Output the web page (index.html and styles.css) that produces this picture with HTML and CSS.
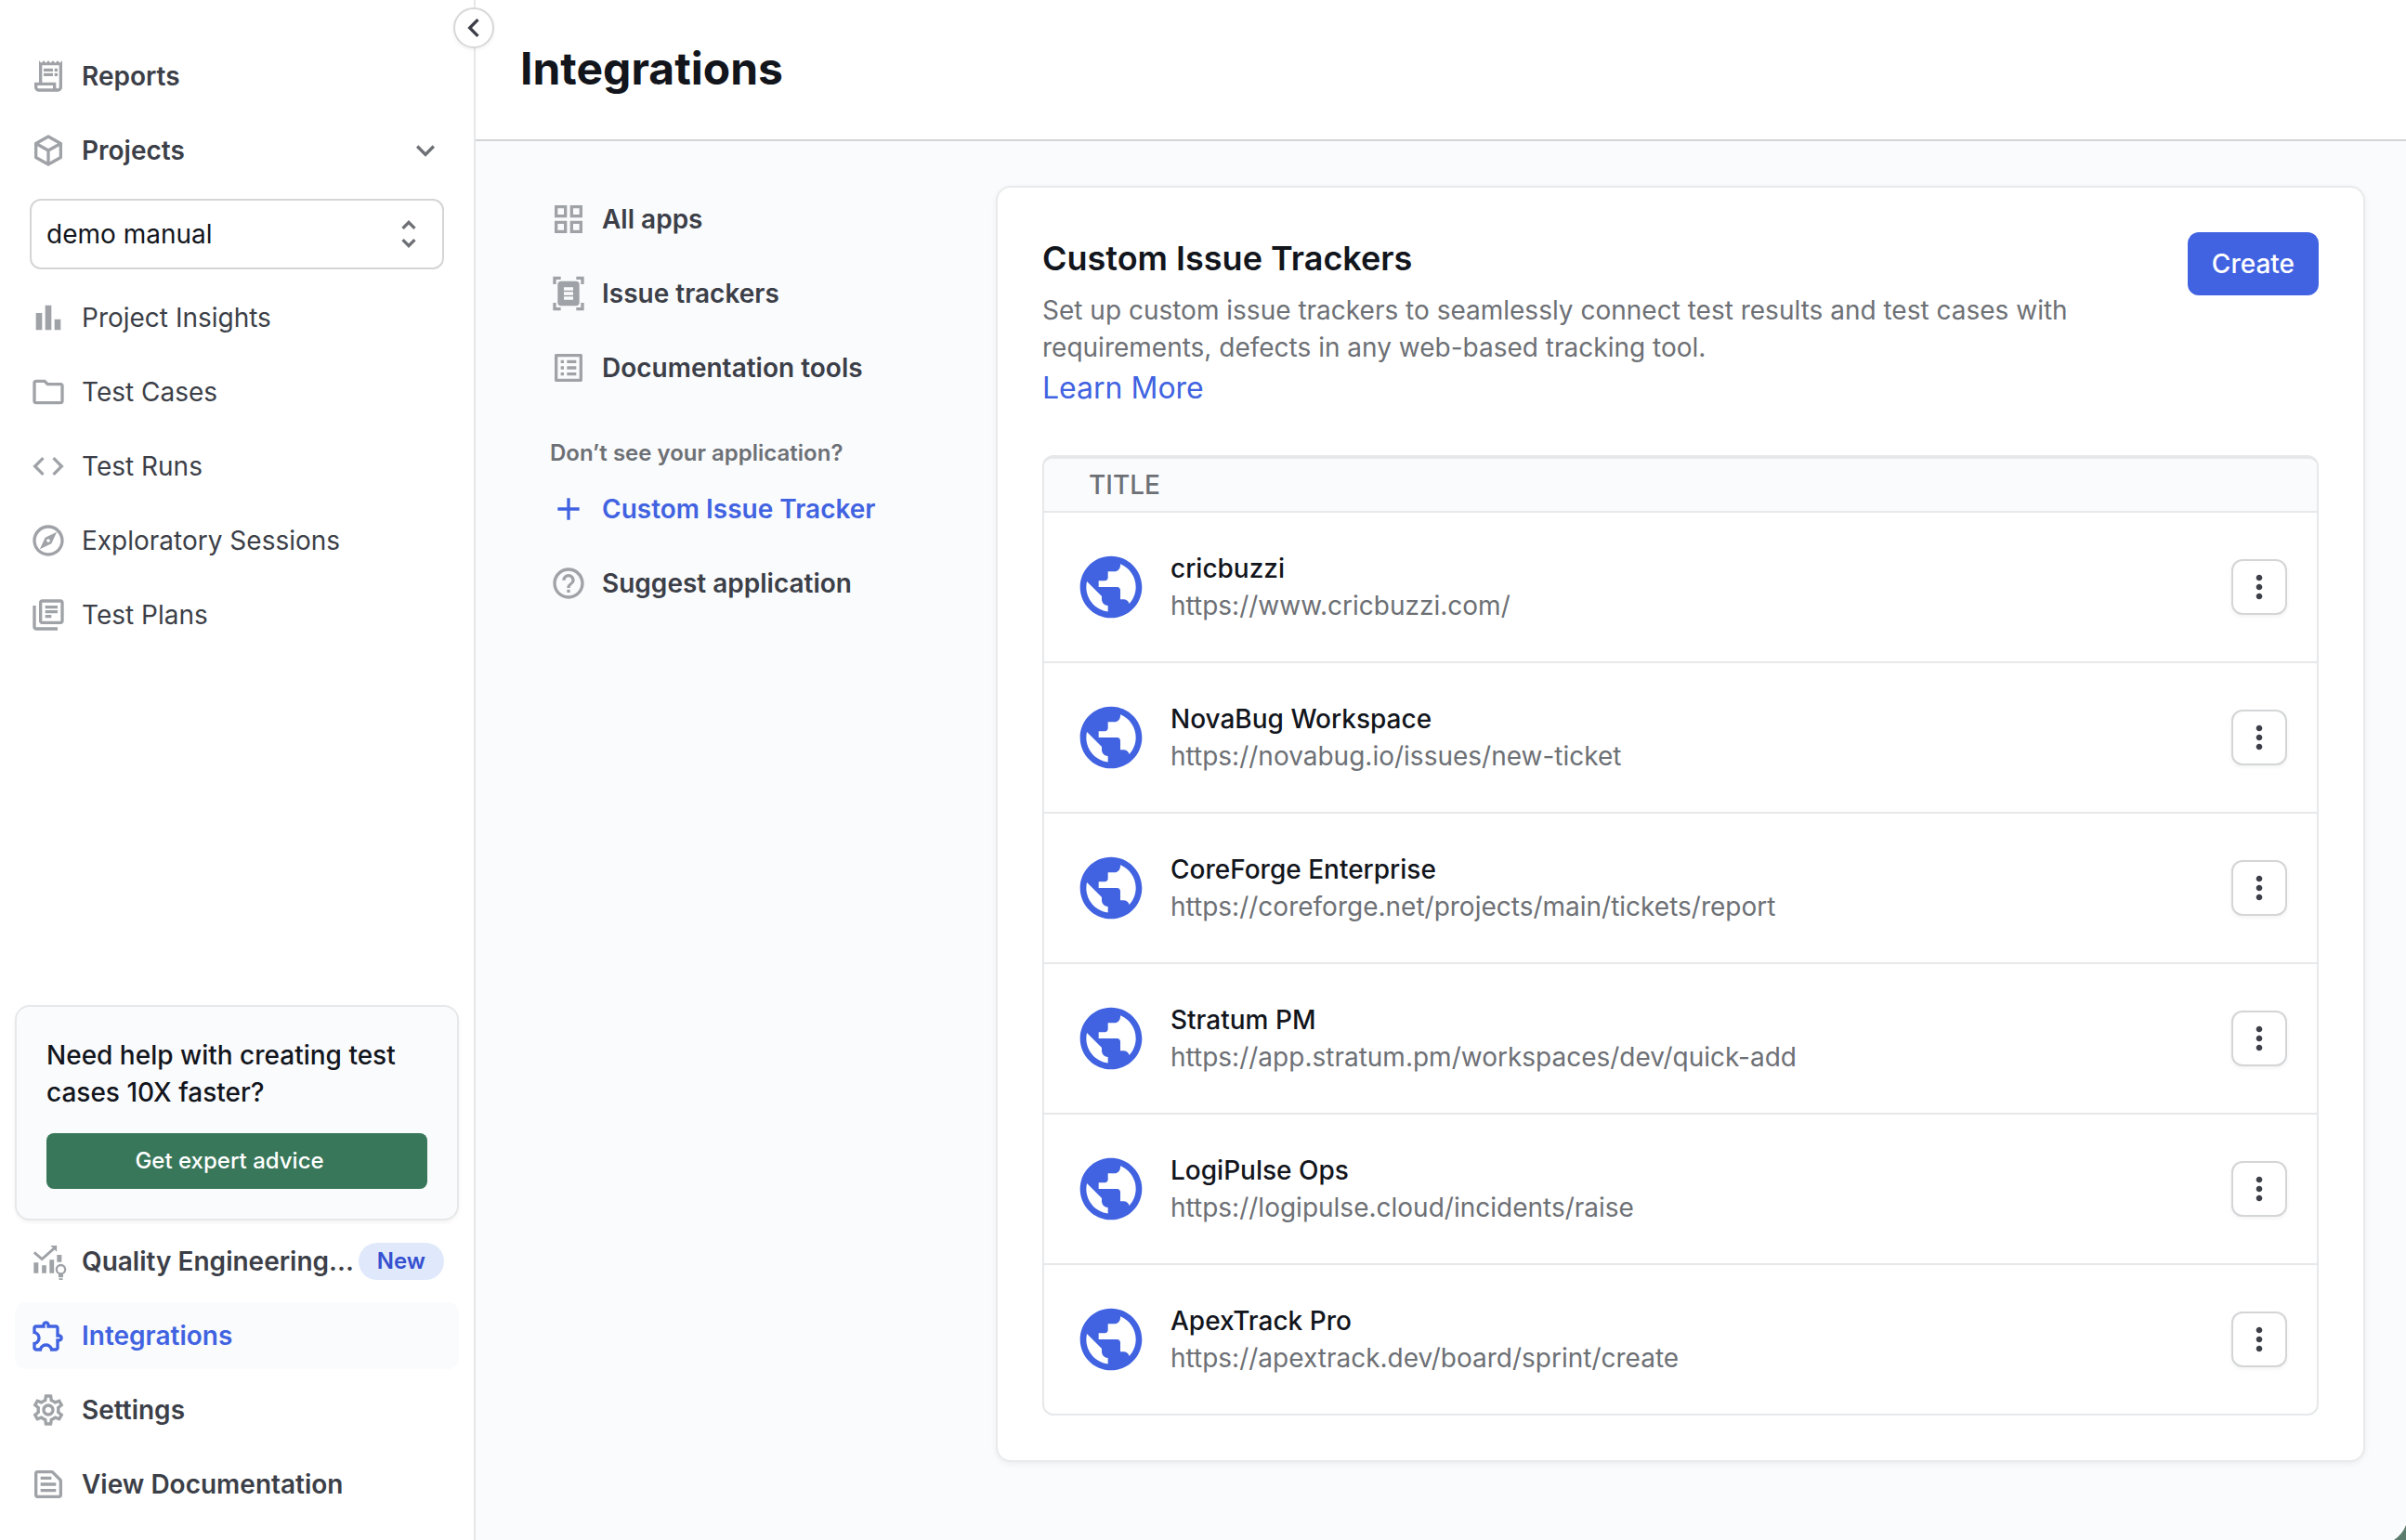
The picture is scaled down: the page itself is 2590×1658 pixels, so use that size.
FILE: index.html
```
<!DOCTYPE html>
<html lang="en">
<head>
<meta charset="utf-8">
<meta name="viewport" content="width=device-width, initial-scale=1">
<title>Integrations</title>
<link rel="stylesheet" href="styles.css">
</head>
<body>

<svg class="sprite">
  <symbol id="i-dots" viewBox="0 0 24 24"><path d="M12 8c1.1 0 2-.9 2-2s-.9-2-2-2-2 .9-2 2 .9 2 2 2zm0 2c-1.1 0-2 .9-2 2s.9 2 2 2 2-.9 2-2-.9-2-2-2zm0 6c-1.1 0-2 .9-2 2s.9 2 2 2 2-.9 2-2-.9-2-2-2z"/></symbol>
  <symbol id="i-globe" viewBox="0 0 24 24"><path d="M12 2C6.48 2 2 6.48 2 12s4.48 10 10 10 10-4.48 10-10S17.52 2 12 2zm-1 17.93c-3.95-.49-7-3.85-7-7.93 0-.62.08-1.21.21-1.79L9 15v1c0 1.1.9 2 2 2v1.93zm6.9-2.54c-.26-.81-1-1.39-1.9-1.39h-1v-3c0-.55-.45-1-1-1H8v-2h2c.55 0 1-.45 1-1V7h2c1.1 0 2-.9 2-2v-.41c2.93 1.19 5 4.06 5 7.41 0 2.08-.8 3.97-2.1 5.39z"/></symbol>
</svg>

<aside class="sidebar">
  <button class="collapse" aria-label="Collapse">
    <svg viewBox="0 0 24 24"><path d="M15.41 7.41L14 6l-6 6 6 6 1.41-1.41L10.83 12z"/></svg>
  </button>

  <nav class="nav">
    <a class="item strong">
      <svg class="icon" viewBox="0 0 24 24"><path d="M19.5 3.5L18 2l-1.5 1.5L15 2l-1.5 1.5L12 2l-1.5 1.5L9 2 7.5 3.5 6 2v14H3v3c0 1.66 1.34 3 3 3h12c1.66 0 3-1.34 3-3V2l-1.5 1.5zM15 20H6c-.55 0-1-.45-1-1v-1h10v2zm4-1c0 .55-.45 1-1 1s-1-.45-1-1v-3H8V5h11v14z"/><path d="M9 7h6v2H9zM16 7h2v2h-2zM9 10h6v2H9zM16 10h2v2h-2z"/></svg>
      <span>Reports</span>
    </a>
    <a class="item strong">
      <svg class="icon line" viewBox="0 0 24 24"><path d="M12 3l8 4.5v9L12 21l-8-4.5v-9zM4 7.5l8 4.5 8-4.5M12 12v9"/></svg>
      <span>Projects</span>
      <svg class="icon arrow" viewBox="0 0 24 24"><path d="M16.59 8.59L12 13.17 7.41 8.59 6 10l6 6 6-6z"/></svg>
    </a>
    <div class="select">
      <span>demo manual</span>
      <svg class="icon arrow" viewBox="0 0 24 24"><path d="M12 5.83L15.17 9l1.41-1.41L12 3 7.41 7.59 8.83 9 12 5.83zm0 12.34L8.83 15l-1.41 1.41L12 21l4.59-4.59L15.17 15 12 18.17z"/></svg>
    </div>
    <a class="item">
      <svg class="icon" viewBox="0 0 24 24"><path d="M4 9h4v11H4zM10 4h4v16h-4zM16 13h4v7h-4z"/></svg>
      <span>Project Insights</span>
    </a>
    <a class="item">
      <svg class="icon" viewBox="0 0 24 24"><path d="M9.17 6l2 2H20v10H4V6h5.17M10 4H4c-1.1 0-1.99.9-1.99 2L2 18c0 1.1.9 2 2 2h16c1.1 0 2-.9 2-2V8c0-1.1-.9-2-2-2h-8l-2-2z"/></svg>
      <span>Test Cases</span>
    </a>
    <a class="item">
      <svg class="icon" viewBox="0 0 24 24"><path d="M9.4 16.6L4.8 12l4.6-4.6L8 6l-6 6 6 6 1.4-1.4zm5.2 0l4.6-4.6-4.6-4.6L16 6l6 6-6 6-1.4-1.4z"/></svg>
      <span>Test Runs</span>
    </a>
    <a class="item">
      <svg class="icon" viewBox="0 0 24 24"><path d="M12 2C6.48 2 2 6.48 2 12s4.48 10 10 10 10-4.48 10-10S17.52 2 12 2zm0 18c-4.41 0-8-3.59-8-8s3.59-8 8-8 8 3.59 8 8-3.59 8-8 8zm-5.5-2.5l7.51-3.49L17.5 6.5 9.99 9.99 6.5 17.5zm5.5-6.6c.61 0 1.1.49 1.1 1.1s-.49 1.1-1.1 1.1-1.1-.49-1.1-1.1.49-1.1 1.1-1.1z"/></svg>
      <span>Exploratory Sessions</span>
    </a>
    <a class="item">
      <svg class="icon" viewBox="0 0 24 24"><path d="M4 6H2v14c0 1.1.9 2 2 2h14v-2H4V6zm16-4H8c-1.1 0-2 .9-2 2v12c0 1.1.9 2 2 2h12c1.1 0 2-.9 2-2V4c0-1.1-.9-2-2-2zm0 14H8V4h12v12zM10 9h8v2h-8zm0 3h4v2h-4zm0-6h8v2h-8z"/></svg>
      <span>Test Plans</span>
    </a>
  </nav>

  <div class="nav bottom">
    <div class="help">
      <p>Need help with creating test cases 10X faster?</p>
      <button class="advice">Get expert advice</button>
    </div>
    <a class="item strong">
      <svg class="icon" viewBox="0 0 24 24"><path d="M2.6 12.8h3v6.8h-3zM7.900 14.600h2.800v5H7.900zM12.800 11h2.900v8.600h-2.900zM17.600 7.800h3v4.600h-3zM13.400 1.800h4.100v4.100z"/><path class="trend" d="M2.900 6.200l5 4.300 8.300-7.300"/><circle class="ring" cx="20.100" cy="17.200" r="2.800"/><path d="M18.600 20.400h3v2h-3zM18.900 23h2.400v1h-2.400z"/></svg>
      <span class="clip">Quality Engineering...</span>
      <span class="badge">New</span>
    </a>
    <a class="item strong active">
      <svg class="icon" viewBox="0 0 24 24"><path d="M10.5 4.5c.28 0 .5.22.5.5v2h6v6h2c.28 0 .5.22.5.5s-.22.5-.5.5h-2v6h-2.12c-.68-1.75-2.39-3-4.38-3s-3.7 1.25-4.38 3H4v-2.12c1.75-.68 3-2.39 3-4.38 0-1.99-1.24-3.7-2.99-4.38L4 7h6V5c0-.28.22-.5.5-.5m0-2C9.12 2.5 8 3.62 8 5H4c-1.1 0-1.99.9-1.99 2v3.8h.29c1.49 0 2.7 1.21 2.7 2.7s-1.21 2.7-2.7 2.7H2V20c0 1.1.9 2 2 2h3.8v-.3c0-1.49 1.21-2.7 2.7-2.7s2.7 1.21 2.7 2.7v.3H17c1.1 0 2-.9 2-2v-4c1.38 0 2.5-1.12 2.5-2.5S20.38 11 19 11V7c0-1.1-.9-2-2-2h-4c0-1.38-1.12-2.5-2.5-2.5z"/></svg>
      <span>Integrations</span>
    </a>
    <a class="item strong">
      <svg class="icon" viewBox="0 0 24 24"><path d="M19.43 12.98c.04-.32.07-.64.07-.98 0-.34-.03-.66-.07-.98l2.11-1.65c.19-.15.24-.42.12-.64l-2-3.46c-.09-.16-.26-.25-.44-.25-.06 0-.12.01-.17.03l-2.49 1c-.52-.4-1.08-.73-1.69-.98l-.38-2.65C14.46 2.18 14.25 2 14 2h-4c-.25 0-.46.18-.49.42l-.38 2.65c-.61.25-1.17.59-1.69.98l-2.49-1c-.06-.02-.12-.03-.18-.03-.17 0-.34.09-.43.25l-2 3.46c-.13.22-.07.49.12.64l2.11 1.65c-.04.32-.07.65-.07.98 0 .33.03.66.07.98l-2.11 1.65c-.19.15-.24.42-.12.64l2 3.46c.09.16.26.25.44.25.06 0 .12-.01.17-.03l2.49-1c.52.4 1.08.73 1.69.98l.38 2.65c.03.24.24.42.49.42h4c.25 0 .46-.18.49-.42l.38-2.65c.61-.25 1.17-.59 1.69-.98l2.49 1c.06.02.12.03.18.03.17 0 .34-.09.43-.25l2-3.46c.12-.22.07-.49-.12-.64l-2.11-1.65zm-1.98-1.71c.04.31.05.52.05.73 0 .21-.02.43-.05.73l-.14 1.13.89.7 1.08.84-.7 1.21-1.27-.51-1.04-.42-.9.68c-.43.32-.84.56-1.25.73l-1.06.43-.16 1.13-.2 1.35h-1.4l-.19-1.35-.16-1.13-1.06-.43c-.43-.18-.83-.41-1.23-.71l-.91-.7-1.06.43-1.27.51-.7-1.21 1.08-.84.89-.7-.14-1.13c-.03-.31-.05-.54-.05-.74s.02-.43.05-.73l.14-1.13-.89-.7-1.08-.84.7-1.21 1.27.51 1.04.42.9-.68c.43-.32.84-.56 1.25-.73l1.06-.43.16-1.13.2-1.35h1.39l.19 1.35.16 1.13 1.06.43c.43.18.83.41 1.23.71l.91.7 1.06-.43 1.27-.51.7 1.21-1.07.85-.89.7.14 1.13zM12 8c-2.21 0-4 1.79-4 4s1.79 4 4 4 4-1.79 4-4-1.79-4-4-4zm0 6c-1.1 0-2-.9-2-2s.9-2 2-2 2 .9 2 2-.9 2-2 2z"/></svg>
      <span>Settings</span>
    </a>
    <a class="item strong">
      <svg class="icon" viewBox="0 0 24 24"><path d="M14.17 5L19 9.83V19H5V5h9.17m0-2H5c-1.1 0-2 .9-2 2v14c0 1.1.9 2 2 2h14c1.1 0 2-.9 2-2V9.83c0-.53-.21-1.04-.59-1.41l-4.83-4.83c-.37-.38-.88-.59-1.41-.59zM7 15h10v2H7v-2zm0-4h10v2H7v-2zm0-4h7v2H7V7z"/></svg>
      <span>View Documentation</span>
    </a>
  </div>
</aside>

<main class="main">
  <header class="header">
    <h1>Integrations</h1>
  </header>

  <div class="content">
    <nav class="subnav">
      <a class="item strong">
        <svg class="icon" viewBox="0 0 24 24"><path d="M3 3v8h8V3H3zm6 6H5V5h4v4zm-6 4v8h8v-8H3zm6 6H5v-4h4v4zm4-16v8h8V3h-8zm6 6h-4V5h4v4zm-6 4v8h8v-8h-8zm6 6h-4v-4h4v4z"/></svg>
        <span>All apps</span>
      </a>
      <a class="item strong">
        <svg class="icon" viewBox="0 0 24 24"><path d="M7 3H4v3H2V1h5v2zm15 3V1h-5v2h3v3h2zM7 21H4v-3H2v5h5v-2zm13-3v3h-3v2h5v-5h-2zm-1 0c0 1.1-.9 2-2 2H7c-1.1 0-2-.9-2-2V6c0-1.1.9-2 2-2h10c1.1 0 2 .9 2 2v12zM15 8H9v2h6V8zm0 3H9v2h6v-2zm0 3H9v2h6v-2z"/></svg>
        <span>Issue trackers</span>
      </a>
      <a class="item strong">
        <svg class="icon" viewBox="0 0 24 24"><path d="M11 7h6v2h-6zm0 4h6v2h-6zm0 4h6v2h-6zM7 7h2v2H7zm0 4h2v2H7zm0 4h2v2H7zM20.1 3H3.9c-.5 0-.9.4-.9.9v16.2c0 .4.4.9.9.9h16.2c.4 0 .9-.5.9-.9V3.900c0-.5-.5-.9-.9-.9zM19 19H5V5h14v14z"/></svg>
        <span>Documentation tools</span>
      </a>
      <p class="hint">Don’t see your application?</p>
      <a class="item strong active">
        <svg class="icon" viewBox="0 0 24 24"><path d="M19 13h-6v6h-2v-6H5v-2h6V5h2v6h6v2z"/></svg>
        <span>Custom Issue Tracker</span>
      </a>
      <a class="item strong">
        <svg class="icon" viewBox="0 0 24 24"><path d="M11 18h2v-2h-2v2zm1-16C6.48 2 2 6.48 2 12s4.48 10 10 10 10-4.48 10-10S17.52 2 12 2zm0 18c-4.41 0-8-3.59-8-8s3.59-8 8-8 8 3.59 8 8-3.59 8-8 8zm0-14c-2.21 0-4 1.79-4 4h2c0-1.1.9-2 2-2s2 .9 2 2c0 2-3 1.75-3 5h2c0-2.25 3-2.5 3-5 0-2.21-1.79-4-4-4z"/></svg>
        <span>Suggest application</span>
      </a>
    </nav>

    <section class="card">
      <div class="card-top">
        <div class="card-text">
          <h2>Custom Issue Trackers</h2>
          <p>Set up custom issue trackers to seamlessly connect test results and test cases with requirements, defects in any web-based tracking tool.</p>
          <a class="learn">Learn More</a>
        </div>
        <button class="create">Create</button>
      </div>

      <div class="table">
        <div class="thead">TITLE</div>
        <div class="row">
          <svg class="globe"><use href="#i-globe"/></svg>
          <div class="info"><b>cricbuzzi</b><span>https://www.cricbuzzi.com/</span></div>
          <button class="more"><svg><use href="#i-dots"/></svg></button>
        </div>
        <div class="row">
          <svg class="globe"><use href="#i-globe"/></svg>
          <div class="info"><b>NovaBug Workspace</b><span>https://novabug.io/issues/new-ticket</span></div>
          <button class="more"><svg><use href="#i-dots"/></svg></button>
        </div>
        <div class="row">
          <svg class="globe"><use href="#i-globe"/></svg>
          <div class="info"><b>CoreForge Enterprise</b><span>https://coreforge.net/projects/main/tickets/report</span></div>
          <button class="more"><svg><use href="#i-dots"/></svg></button>
        </div>
        <div class="row">
          <svg class="globe"><use href="#i-globe"/></svg>
          <div class="info"><b>Stratum PM</b><span>https://app.stratum.pm/workspaces/dev/quick-add</span></div>
          <button class="more"><svg><use href="#i-dots"/></svg></button>
        </div>
        <div class="row">
          <svg class="globe"><use href="#i-globe"/></svg>
          <div class="info"><b>LogiPulse Ops</b><span>https://logipulse.cloud/incidents/raise</span></div>
          <button class="more"><svg><use href="#i-dots"/></svg></button>
        </div>
        <div class="row">
          <svg class="globe"><use href="#i-globe"/></svg>
          <div class="info"><b>ApexTrack Pro</b><span>https://apextrack.dev/board/sprint/create</span></div>
          <button class="more"><svg><use href="#i-dots"/></svg></button>
        </div>
      </div>
    </section>
  </div>
</main>

<svg class="corner" viewBox="0 0 16 16"><path d="M16 0V16H3Q12 10 16 0z"/></svg>

</body>
</html>
```
FILE: styles.css
```
* {
  box-sizing: border-box;
}

body {
  margin: 0;
  display: flex;
  height: 1658px;
  overflow: hidden;
  font-family: Inter, sans-serif;
  font-size: 28px;
  line-height: 40px;
  color: #3c3f48;
  background: #fafbfd;
}

h1, h2, p {
  margin: 0;
}

button {
  font: inherit;
  padding: 0;
  border: none;
  cursor: pointer;
}

.sprite {
  display: none;
}

/* Sidebar */
.sidebar {
  position: relative;
  width: 512px;
  flex-shrink: 0;
  display: flex;
  flex-direction: column;
  justify-content: space-between;
  padding: 46px 16px 24px;
  background: #fff;
  border-right: 2px solid #e6e7e9;
}

/* sits on top of the sidebar border */
.collapse {
  position: absolute;
  top: 8px;
  right: -22px;
  width: 44px;
  height: 44px;
  display: flex;
  align-items: center;
  justify-content: center;
  background: #fff;
  border: 2px solid #d6d7d9;
  border-radius: 50%;
  box-shadow: 0 2px 4px rgba(0,0,0,0.05);
}

.collapse svg {
  width: 40px;
  height: 40px;
  flex-shrink: 0;
  fill: #3c3f48;
}

.nav, .subnav {
  display: flex;
  flex-direction: column;
  gap: 8px;
}

.item {
  display: flex;
  align-items: center;
  gap: 16px;
  height: 72px;
  padding: 0 16px;
  border-radius: 12px;
}

.icon {
  width: 40px;
  height: 40px;
  flex-shrink: 0;
  overflow: visible;
  fill: #9fa2a6;
}

.line {
  fill: none;
  stroke: #9fa2a6;
  stroke-width: 2;
  stroke-linejoin: round;
}

.ring {
  fill: none;
  stroke: #9fa2a6;
  stroke-width: 1.4;
}

.trend {
  fill: none;
  stroke: #9fa2a6;
  stroke-width: 1.7;
}

.arrow {
  margin-left: auto;
  fill: #6d7075;
}

.strong {
  font-weight: 600;
}

.active {
  color: #4163e1;
}

.active .icon {
  fill: #4163e1;
}

.nav .active {
  background: #fafbfd;
}

.select {
  display: flex;
  align-items: center;
  height: 76px;
  margin: 8px 16px;
  padding: 0 16px;
  border: 2px solid #d4d5d7;
  border-radius: 12px;
  color: #12151c;
}

.help {
  padding: 32px;
  border: 2px solid #e6e8ea;
  border-radius: 16px;
  background: #fafbfd;
  box-shadow: 0 2px 4px rgba(0,0,0,0.05);
  font-weight: 500;
  color: #12151c;
}

.advice {
  width: 100%;
  height: 60px;
  margin-top: 24px;
  padding-right: 16px;
  display: block;
  border-radius: 8px;
  background: #39775a;
  color: #fff;
  font-size: 24px;
  font-weight: 500;
}

.clip {
  flex: 1;
  width: 0;
  margin-right: -16px;
  white-space: nowrap;
}

.badge {
  padding: 0 20px;
  border-radius: 20px;
  background: #dfe9fb;
  color: #3650d0;
  font-size: 24px;
}

/* Main */
.main {
  flex: 1;
}

.header {
  height: 152px;
  padding: 46px 48px 0;
  background: #fff;
  border-bottom: 2px solid #d2d4d6;
}

h1 {
  font-size: 48px;
  line-height: 56px;
  font-weight: 700;
  color: #12151c;
}

.content {
  display: flex;
  align-items: flex-start;
  padding: 48px 44px 0 64px;
}

.subnav {
  width: 496px;
}

.hint {
  margin: 32px 0 0 16px;
  font-size: 24px;
  line-height: 32px;
  font-weight: 600;
  color: #6d7075;
}

.card {
  flex: 1;
  padding: 48px;
  border: 2px solid #e8eaeb;
  border-radius: 16px;
  background: #fff;
  box-shadow: 0 2px 6px rgba(0,0,0,0.06);
}

.card-top {
  display: flex;
  justify-content: space-between;
  align-items: flex-start;
  margin-bottom: 48px;
}

.card-text {
  width: 1140px;
}

h2 {
  font-size: 36px;
  line-height: 56px;
  font-weight: 600;
  color: #12151c;
}

.card-text p {
  margin-top: 8px;
  color: #6d7075;
}

.learn {
  display: block;
  font-size: 32px;
  line-height: 48px;
  color: #4163e1;
}

.create {
  height: 68px;
  padding: 0 26px;
  border-radius: 12px;
  background: #4163e1;
  color: #fff;
  font-weight: 500;
}

/* Tracker list */
.table {
  border: 2px solid #e6e8ea;
  border-top-width: 4px;
  border-radius: 12px;
  overflow: hidden;
}

.thead {
  height: 56px;
  padding: 8px 48px;
  background: #fafbfd;
  font-weight: 500;
  color: #6d7075;
}

.row {
  display: flex;
  align-items: center;
  height: 162px;
  padding: 0 32px;
  border-top: 2px solid #e6e8ea;
}

.globe {
  width: 80px;
  height: 80px;
  margin-right: 24px;
  fill: #4163e1;
}

.info {
  flex: 1;
  display: flex;
  flex-direction: column;
}

.info b {
  font-weight: 500;
  color: #12151c;
}

.info span {
  color: #6d7075;
}

.more {
  width: 60px;
  height: 60px;
  display: flex;
  align-items: center;
  justify-content: center;
  background: #fff;
  border: 2px solid #d4d5d7;
  border-radius: 12px;
  box-shadow: 0 2px 4px rgba(0,0,0,0.05);
}

.more svg {
  width: 40px;
  height: 40px;
  fill: #3c3f48;
}

/* rounded edge of the window */
.corner {
  position: fixed;
  right: 0;
  bottom: 0;
  width: 16px;
  height: 16px;
  fill: #5c7c6d;
}
```
